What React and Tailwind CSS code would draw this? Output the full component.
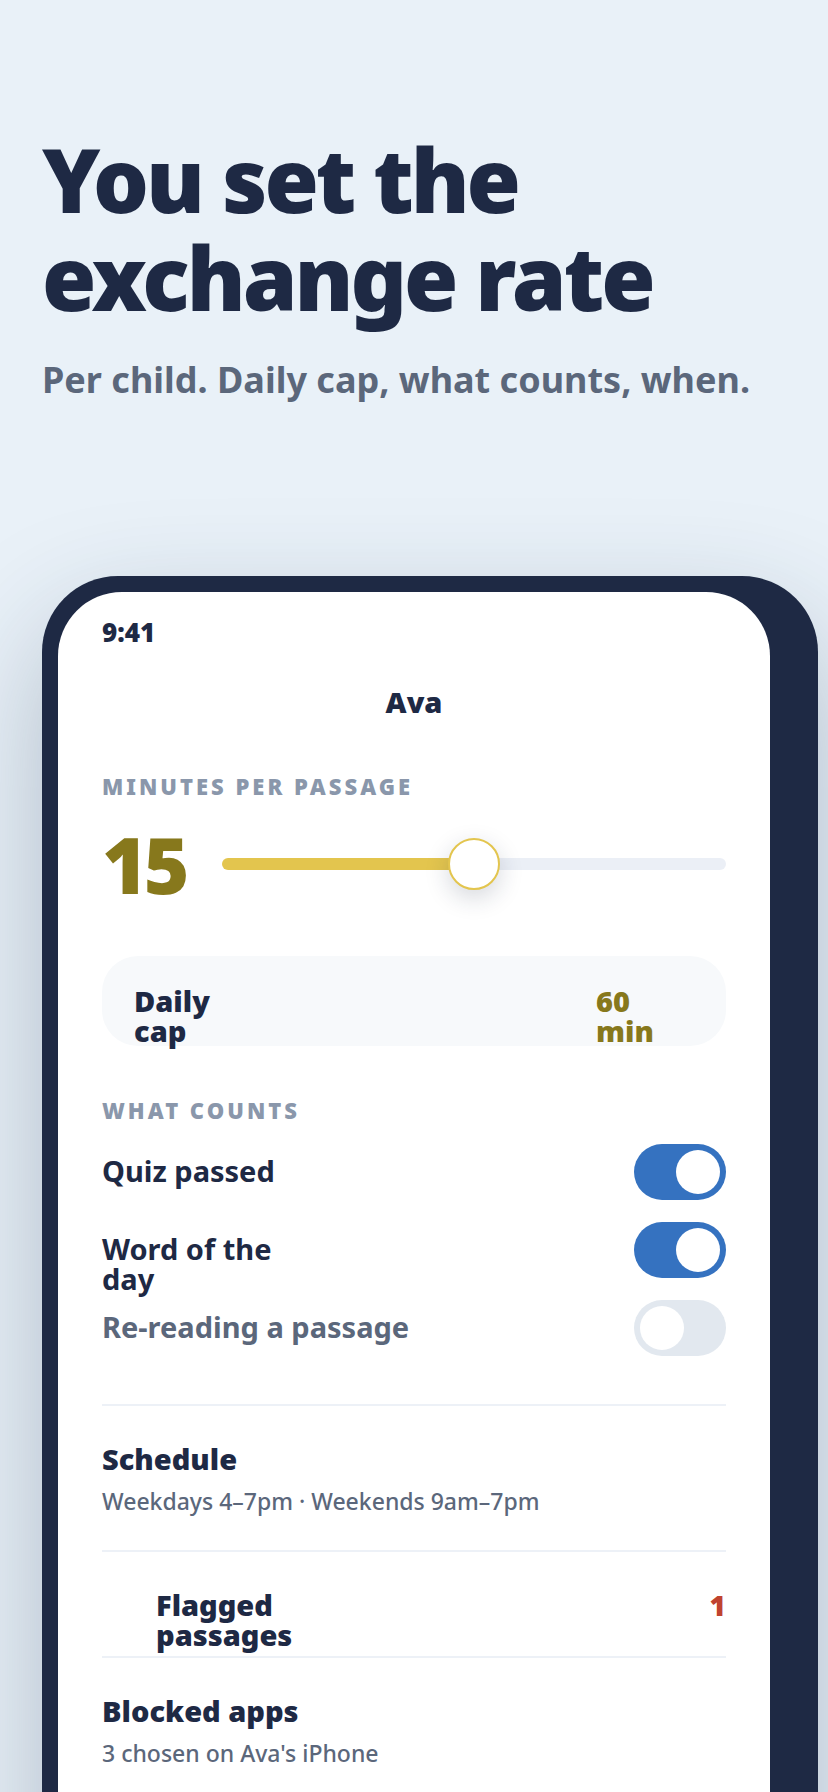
import React, { useState } from "react";

const RULES = [
  { id: "quiz", label: "Quiz passed", on: true },
  { id: "word", label: "Word of the day", on: true },
  { id: "reread", label: "Re-reading a passage", on: false },
];

function SectionLabel({ children, className = "" }) {
  return (
    <h2 className={`text-[22px] leading-8 font-black tracking-[3px] uppercase text-[#8a97ab] ${className}`}>
      {children}
    </h2>
  );
}

function MinutesSlider({ value, onChange }) {
  const max = 30;
  const pct = (value / max) * 100;

  return (
    <div className="mt-[22px] flex items-center gap-9">
      <output htmlFor="minutes" className="w-[84px] text-[78px] leading-[80px] font-black tracking-[-4px] text-[#87781c]">
        {value}
      </output>
      <input
        id="minutes"
        type="range"
        min="0"
        max={max}
        value={value}
        onChange={(e) => onChange(Number(e.target.value))}
        aria-label="Minutes per passage"
        className="h-3 min-w-0 flex-1 appearance-none rounded-full [&::-webkit-slider-thumb]:size-[52px] [&::-webkit-slider-thumb]:appearance-none [&::-webkit-slider-thumb]:rounded-full [&::-webkit-slider-thumb]:border-2 [&::-webkit-slider-thumb]:border-[#e3c54e] [&::-webkit-slider-thumb]:bg-white [&::-webkit-slider-thumb]:shadow-[0_8px_24px_rgba(30,41,68,0.18)]"
        style={{ background: `linear-gradient(to right, #e3c54e ${pct}%, #ebeff6 ${pct}%)` }}
      />
    </div>
  );
}

function ToggleRow({ id, label, on, onToggle }) {
  return (
    <div className="flex h-14 items-start justify-between">
      <label
        htmlFor={id}
        className={`pt-3 text-[29px] leading-[30px] font-bold ${on ? "max-w-[200px] text-[#1e2944]" : "text-[#5b677b]"}`}
      >
        {label}
      </label>
      <input
        id={id}
        type="checkbox"
        role="switch"
        checked={on}
        onChange={onToggle}
        className="h-14 w-[92px] shrink-0 cursor-pointer appearance-none rounded-full bg-[#e2e8ef] p-[6px] before:block before:size-11 before:rounded-full before:bg-white before:transition-transform checked:bg-[#3572c0] checked:before:translate-x-9"
      />
    </div>
  );
}

function InfoRow({ title, detail }) {
  return (
    <section className="border-t-2 border-[#edf1f7] pt-[33px] pb-[33px]">
      <h3 className="text-[29px] leading-10 font-black">{title}</h3>
      <p className="mt-[6px] text-[23px] leading-8 font-medium text-[#5b677b]">{detail}</p>
    </section>
  );
}

function App() {
  const [minutes, setMinutes] = useState(15);
  const [rules, setRules] = useState(RULES);

  const toggleRule = (id) => {
    setRules((prev) => prev.map((r) => (r.id === id ? { ...r, on: !r.on } : r)));
  };

  return (
    <main className="flex min-h-screen flex-col overflow-hidden bg-[#e9f1f8] font-['Noto_Sans','Open_Sans',sans-serif] text-[#1e2944]">
      <header className="px-[42px] pt-[130px]">
        <h1 className="max-w-[680px] text-[88px] leading-[98px] font-black tracking-[-3px]">You set the exchange rate</h1>
        <p className="mt-[30px] text-[36px] leading-[48px] font-bold text-[#5b677b]">
          Per child. Daily cap, what counts, when.
        </p>
      </header>

      {/* phone runs off the bottom of the page */}
      <div className="mt-[172px] mr-[10px] -mb-20 ml-[42px] flex flex-1 flex-col rounded-t-[76px] bg-[#1e2944] pt-4 pr-12 pl-4 shadow-[0_48px_120px_rgba(30,50,80,0.28)]">
        <div className="flex-1 rounded-t-[64px] bg-white px-11 pt-6 pb-20">
          <p className="text-[26px] leading-8 font-black">9:41</p>
          <h2 className="mt-[34px] text-center text-[29px] leading-10 font-black">Ava</h2>

          <SectionLabel className="mt-12">Minutes per passage</SectionLabel>
          <MinutesSlider value={minutes} onChange={setMinutes} />

          <div className="mt-[52px] flex justify-between rounded-[36px] bg-[#f7f9fb] px-8 pt-[30px] text-[29px] leading-[30px] font-black">
            <span className="w-[100px]">Daily cap</span>
            <span className="w-[98px] text-[#87781c]">60 min</span>
          </div>

          <SectionLabel className="mt-12">What counts</SectionLabel>
          <div className="mt-[18px] mb-12 flex flex-col gap-[22px]">
            {rules.map((rule) => (
              <ToggleRow key={rule.id} {...rule} onToggle={() => toggleRule(rule.id)} />
            ))}
          </div>

          <InfoRow title="Schedule" detail="Weekdays 4–7pm · Weekends 9am–7pm" />
          <section className="flex justify-between border-t-2 border-[#edf1f7] pt-[38px] pb-[6px] pl-[54px] leading-[30px] font-black">
            <h3 className="w-[150px] text-[29px]">Flagged passages</h3>
            <span className="text-[28px] text-[#c0432f]">1</span>
          </section>
          <InfoRow title="Blocked apps" detail="3 chosen on Ava's iPhone" />
        </div>
      </div>
    </main>
  );
}

export default App;
